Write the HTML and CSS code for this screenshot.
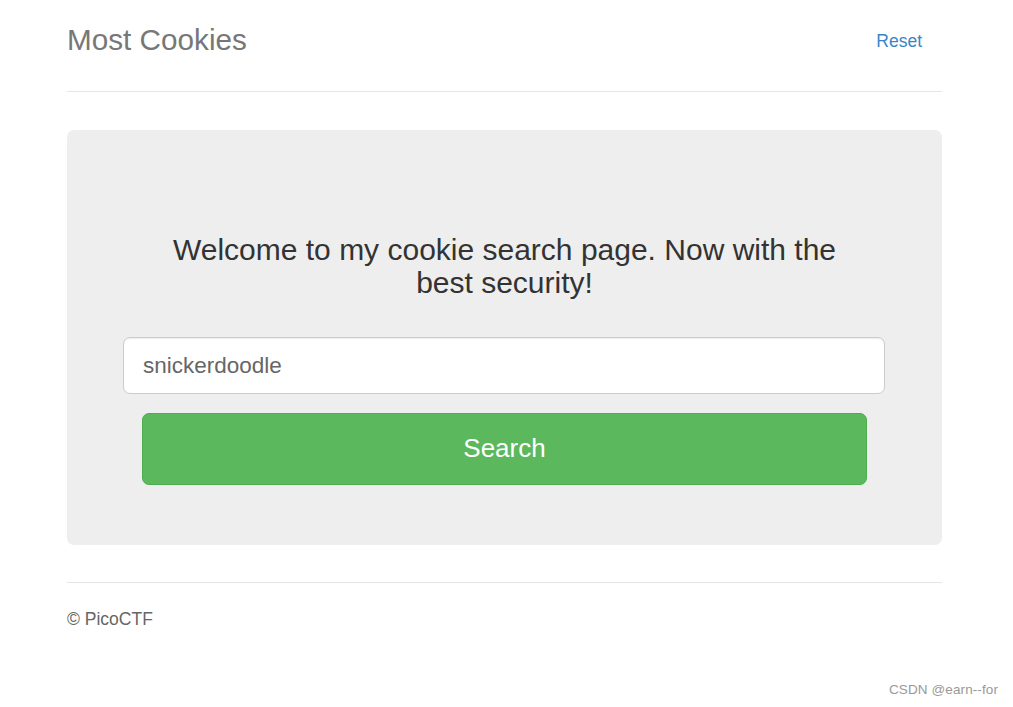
FILE: index.html
```html
<!DOCTYPE html>
<html lang="en">
<head>
<meta charset="utf-8">
<title>Most Cookies</title>
<link rel="stylesheet" href="styles.css">
</head>
<body>
<div class="container">
  <header class="header">
    <h3 class="brand">Most Cookies</h3>
    <nav class="nav"><a class="nav-link" href="#">Reset</a></nav>
  </header>
  <main class="jumbotron">
    <div class="intro">
      <h3 class="welcome">Welcome to my cookie search page. Now with the best security!</h3>
    </div>
    <form class="search-form">
      <input class="search-input" type="text" placeholder="snickerdoodle">
      <div class="btn-wrap">
        <button class="btn-search" type="button">Search</button>
      </div>
    </form>
  </main>
  <footer class="footer">
    <p class="copy">© PicoCTF</p>
  </footer>
</div>
<div class="watermark">CSDN @earn--for</div>
</body>
</html>
```
FILE: styles.css
```css
html, body {
  margin: 0;
  padding: 0;
  background: #fff;
}
body {
  font-family: "Liberation Sans", Arial, sans-serif;
  color: #333;
  width: 1013px;
  height: 707px;
  position: relative;
  overflow: hidden;
}
.container {
  width: 875px;
  margin-left: 67px;
}
.header {
  display: flex;
  justify-content: space-between;
  align-items: flex-start;
  padding-top: 20px;
  padding-bottom: 31px;
  border-bottom: 1px solid #e5e5e5;
}
.brand {
  margin: 0;
  font-size: 29.7px;
  font-weight: normal;
  line-height: 40px;
  color: #777;
}
.nav {
  padding-top: 9px;
  padding-right: 20px;
}
.nav-link {
  font-size: 17.5px;
  line-height: 24px;
  color: #3a85c6;
  text-decoration: none;
}
.jumbotron {
  margin-top: 38px;
  background: #eee;
  border-radius: 7px;
  padding: 103px 57px 60px;
}
.intro {
  margin: 0 18px;
  text-align: center;
}
.welcome {
  margin: 0;
  font-size: 30px;
  font-weight: normal;
  line-height: 33px;
  color: #333;
}
.search-form {
  margin-top: 38px;
}
.search-input {
  display: block;
  box-sizing: border-box;
  width: 762px;
  margin-left: -1px;
  height: 57px;
  padding: 0 19px;
  font-family: "Liberation Sans", Arial, sans-serif;
  font-size: 22.5px;
  color: #555;
  background: #fff;
  border: 1px solid #ccc;
  border-radius: 7px;
  box-shadow: inset 0 1px 1px rgba(0,0,0,.075);
  outline: none;
}
.search-input::placeholder {
  color: #666;
  opacity: 1;
}
.btn-wrap {
  margin: 19px 18px 0 18px;
}
.btn-search {
  display: flex;
  align-items: center;
  justify-content: center;
  box-sizing: border-box;
  width: 100%;
  height: 72px;
  font-family: "Liberation Sans", Arial, sans-serif;
  font-size: 26px;
  color: #fff;
  background: #5cb85c;
  border: 1px solid #4cae4c;
  border-radius: 7px;
  padding: 0 0 2px;
  cursor: pointer;
}
.footer {
  margin-top: 37px;
  border-top: 1px solid #e5e5e5;
  padding-top: 24px;
}
.copy {
  margin: 0;
  font-size: 17.5px;
  line-height: 24px;
  color: #666;
}
.watermark {
  position: absolute;
  right: 15px;
  top: 682px;
  font-size: 13.5px;
  color: #999;
  letter-spacing: 0.1px;
}
```
